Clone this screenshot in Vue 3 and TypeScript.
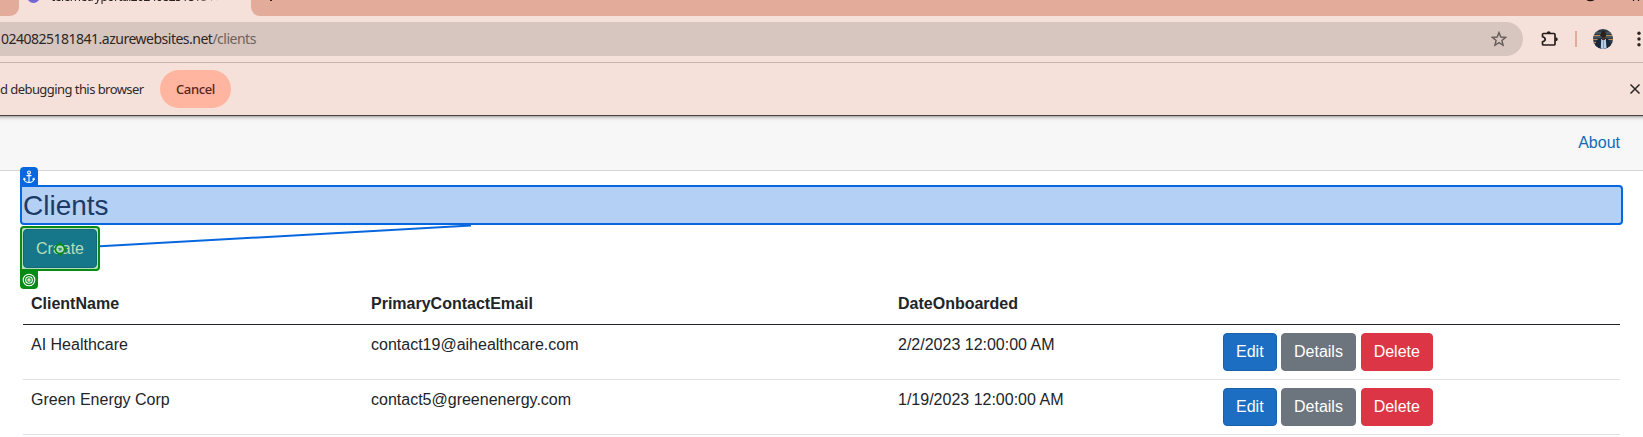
<script setup lang="ts">
interface Client {
  name: string
  email: string
  onboarded: string
}

const clients: Client[] = [
  { name: 'AI Healthcare', email: 'contact19@aihealthcare.com', onboarded: '2/2/2023 12:00:00 AM' },
  { name: 'Green Energy Corp', email: 'contact5@greenenergy.com', onboarded: '1/19/2023 12:00:00 AM' },
]
</script>

<template>
  <div class="window">
    <div class="tabstrip">
      <div class="tab previous"></div>
      <div class="tab active">
        <span class="favicon"></span>
        <span class="tab-title">telemetryportal20240825181841</span>
      </div>
      <div class="strip-rest">
        <span class="new-tab"></span>
        <svg class="controls" width="60" height="4" viewBox="0 0 60 4">
          <path d="M5 -.4 Q8 1.200 12 -.4" fill="none" stroke="#201412" stroke-width="1.6" />
          <path d="M51.500 0v1M56.500 0v1" stroke="#201412" stroke-width="1.2" />
        </svg>
      </div>
    </div>

    <div class="toolbar">
      <div class="address">
        <span class="url">0240825181841.azurewebsites.net<span class="path">/clients</span></span>
        <svg class="star" width="16" height="16" viewBox="0 0 16 16">
          <path d="M8 1.5l1.8 4.5 4.8.4-3.7 3.1 1.2 4.8L8 11.7l-4.1 2.6 1.2-4.8L1.400 6.400l4.800-.4z" fill="none" stroke="#665d5a" stroke-width="1.4" />
        </svg>
      </div>
      <svg class="puzzle" width="18" height="18" viewBox="0 0 18 18">
        <path d="M2.500 3.500H13Q14 3.500 14 4.500V14Q14 15 13 15H2.500Q1.500 15 1.500 14V11.800Q4.200 11 4.200 9.200Q4.200 7.500 1.500 6.800V4.500Q1.500 3.500 2.500 3.500Z" fill="none" stroke="#241e1d" stroke-width="1.7" stroke-linejoin="round" />
        <path d="M5.700 3Q5.700 1.200 7.700 1.200T9.700 3ZM14.500 7.200Q16.800 7.200 16.800 9.200T14.500 11.200Z" fill="#241e1d" />
      </svg>
      <span class="divider"></span>
      <svg class="avatar" width="20" height="20" viewBox="0 0 20 20">
        <defs><clipPath id="avatar-clip"><circle cx="10" cy="10" r="10" /></clipPath></defs>
        <g clip-path="url(#avatar-clip)">
          <rect width="20" height="20" fill="#2b3b48" />
          <path d="M0 4h20M0 8h20" stroke="#46545c" stroke-width="2" />
          <path d="M1 6.500h6M13 6.500h6M0 10.500h5M15 10.500h5M1 13.500h3" stroke="#c08a50" stroke-width="1" />
          <path d="M2 20Q2 10 7 9.500H13Q18 10 18 20Z" fill="#16283a" />
          <path d="M8.200 10h4.600l.8 10H7.800Z" fill="#bdcdec" />
          <path d="M10.500 11v9" stroke="#7894c9" stroke-width="1" />
          <ellipse cx="10.400" cy="5.500" rx="2.500" ry="3.800" fill="#2b2119" />
          <path d="M9 8h3v3H9Z" fill="#493125" />
        </g>
      </svg>
      <svg class="kebab" width="4" height="16" viewBox="0 0 4 16">
        <circle cx="2" cy="2.200" r="1.700" /><circle cx="2" cy="8" r="1.700" /><circle cx="2" cy="13.800" r="1.700" />
      </svg>
    </div>

    <div class="infobar">
      <span class="info-text">d debugging this browser</span>
      <button class="cancel">Cancel</button>
      <svg class="close" width="10" height="10" viewBox="0 0 10 10">
        <path d="M.5 .5l9 9M9.500 .5l-9 9" stroke="#2b2524" stroke-width="1.500" />
      </svg>
    </div>

    <nav class="site-nav"><a class="about">About</a></nav>

    <main class="content">
      <div class="anchor-box">
        <h1>Clients</h1>
        <span class="badge anchor-badge">
          <svg width="12" height="14" viewBox="0 0 12 14" fill="none" stroke="#fff" stroke-width="1.100">
            <circle cx="6" cy="2.400" r="1.400" />
            <path d="M6 4v8.600M3.500 5.600h5M1 8.700Q1.400 12.300 6 12.500Q10.600 12.300 11 8.700M.4 9.900L1.100 8.300l1.600 1.100M11.600 9.900L10.900 8.300 9.300 9.400" />
          </svg>
        </span>
      </div>
      <div class="target-box">
        <button class="create">Create</button>
        <svg class="crosshair" width="16" height="16" viewBox="0 0 16 16" fill="none">
          <circle cx="8" cy="8" r="4.500" stroke="#078b14" stroke-width="1.900" />
          <circle cx="8" cy="8" r="2.700" stroke="#b7dfc1" stroke-width="1.700" />
          <circle cx="8" cy="8" r="1.100" fill="#14883c" />
          <path d="M8 1v3M8 12v3M1 8h3M12 8h3" stroke="#078b14" stroke-width="1.500" />
        </svg>
        <span class="badge target-badge">
          <svg width="14" height="14" viewBox="0 0 14 14" fill="none" stroke="#fff" stroke-width="1.100">
            <circle cx="7" cy="7" r="5.800" /><circle cx="7" cy="7" r="3.300" /><circle cx="7" cy="7" r="1.100" />
          </svg>
        </span>
        <svg class="connector" width="373" height="24" viewBox="0 0 373 24">
          <path d="M0 21.300L371 .5" stroke="#0667df" stroke-width="2" />
        </svg>
      </div>

      <table>
        <colgroup><col class="c-name" /><col class="c-email" /><col class="c-date" /><col /></colgroup>
        <thead>
          <tr><th>ClientName</th><th>PrimaryContactEmail</th><th>DateOnboarded</th><th></th></tr>
        </thead>
        <tbody>
          <tr v-for="client in clients" :key="client.name">
            <td>{{ client.name }}</td>
            <td>{{ client.email }}</td>
            <td>{{ client.onboarded }}</td>
            <td>
              <div class="actions">
                <button class="edit">Edit</button>
                <button class="details">Details</button>
                <button class="delete">Delete</button>
              </div>
            </td>
          </tr>
        </tbody>
      </table>
    </main>
  </div>
</template>

<style>
body { margin: 0; background: #fff; overflow: hidden; }
</style>

<style scoped>
* { box-sizing: border-box; }
.window { width: 1643px; height: 437px; overflow: hidden; background: #fff; font: 16px/24px "Liberation Sans", Arial, sans-serif; color: #212529; }
button { font-family: inherit; margin: 0; white-space: nowrap; }
svg { display: block; flex: none; }

.tabstrip { display: flex; height: 16px; background: #f5e1da; font-family: "Noto Sans", sans-serif; }
.previous { width: 19px; background: #e3ab9a; border-bottom-right-radius: 9px; }
.active { display: flex; width: 232px; padding-left: 8px; overflow: hidden; }
.favicon { width: 13px; height: 13px; margin-top: -10px; border: 3px solid #7564d8; border-radius: 50%; background: #d7ccfa; flex: none; }
.tab-title { height: 16px; margin: -11px 0 0 11px; font-size: 12px; line-height: 16px; letter-spacing: -.55px; color: #2b2020; white-space: nowrap; -webkit-mask-image: linear-gradient(90deg, #000 85%, transparent); mask-image: linear-gradient(90deg, #000 85%, transparent); }
.strip-rest { flex: 1; display: flex; justify-content: space-between; background: #e3ab9a; border-bottom-left-radius: 9px; }
.new-tab { width: 2px; height: 1px; margin-left: 19px; background: #382522; }
.controls { margin-right: 1px; }

.toolbar { display: flex; align-items: center; height: 47px; padding-bottom: 1px; background: #f5e1da; border-bottom: 1px solid #c6b5af; font-family: "Noto Sans", sans-serif; }
.address { display: flex; flex: none; align-items: center; justify-content: space-between; width: 1523px; height: 34px; padding: 0 16px 0 1px; background: #d7c6bf; border-radius: 0 17px 17px 0; margin-top: 1px; }
.url { font-size: 14px; line-height: 20px; letter-spacing: -.5px; color: #2b2726; white-space: nowrap; }
.path { color: #6b6260; }
.puzzle { margin-left: 18px; }
.divider { flex: none; width: 2px; height: 16px; margin-left: 16px; background: #e3ab9a; }
.avatar { margin-left: 16px; }
.kebab { margin-left: 24px; fill: #2b2524; }

.infobar { display: flex; align-items: center; height: 53px; background: #f5e1da; border-bottom: 1px solid #4b4140; font-family: "Noto Sans", sans-serif; }
.info-text { width: 160px; font-size: 13px; line-height: 20px; letter-spacing: -.56px; color: #302a29; white-space: nowrap; }
.cancel { width: 71px; height: 38px; border: 0; border-radius: 19px; background: #ffb59f; color: #55261b; font-size: 13px; font-weight: 500; letter-spacing: -.35px; padding: 0; }
.close { margin-left: auto; margin-right: 3px; }

.site-nav { display: flex; align-items: center; justify-content: flex-end; height: 55px; padding-right: 23px; background: linear-gradient(#aaa 0, #dedede 2px, #f2f2f2 4px, #f7f7f7 6px); border-bottom: 1px solid #d5d5d5; }
.about { color: #0f6cb5; }

.content { padding: 14px 20px 0; }
.anchor-box { position: relative; width: 1603px; height: 40px; padding: 2px 0 0 1px; border: 2px solid #0667df; border-radius: 0 4px 4px 4px; background: #b4d1f5; }
h1 { margin: 0; font-size: 28px; line-height: 34px; font-weight: 400; color: #1b3b66; }
.badge { position: absolute; left: -2px; display: flex; align-items: center; justify-content: center; width: 18px; height: 19px; }
.anchor-badge { top: -20px; background: #0667df; border-radius: 4px 4px 0 0; }
.target-box { position: relative; width: 80px; height: 45px; margin-top: 1px; padding: 1px; border: 2px solid #078b14; border-radius: 4px 4px 4px 0; background: #b4dfb8; }
.create { display: block; width: 74px; height: 39px; padding: 0; border: 1px solid #126879; border-radius: 4px; background: #16778b; color: #b4dfb8; font-size: 16px; }
.crosshair { position: absolute; left: 30px; top: 13px; }
.target-badge { top: 42px; background: #078b14; border-radius: 0 0 4px 4px; }
.connector { position: absolute; left: 78px; top: -3px; }

table { width: 1597px; margin: 13px 0 0 3px; border-collapse: separate; border-spacing: 0; table-layout: fixed; }
.c-name { width: 340px; }
.c-email { width: 527px; }
.c-date { width: 325px; }
th, td { padding: 8px; text-align: left; vertical-align: top; border-bottom: 1px solid #dee2e6; }
th { height: 41px; border-bottom-color: #212529; }
.actions { display: flex; gap: 4.45px; }
.actions button { height: 38px; padding: 0 12px; border: 1px solid; border-radius: 4px; color: #fff; font-size: 16px; }
.actions .edit { background: #1b6ec2; border-color: #1861ac; }
.actions .details { background: #6c757d; border-color: #6c757d; }
.actions .delete { margin-left: .3px; background: #dc3545; border-color: #dc3545; }
</style>
